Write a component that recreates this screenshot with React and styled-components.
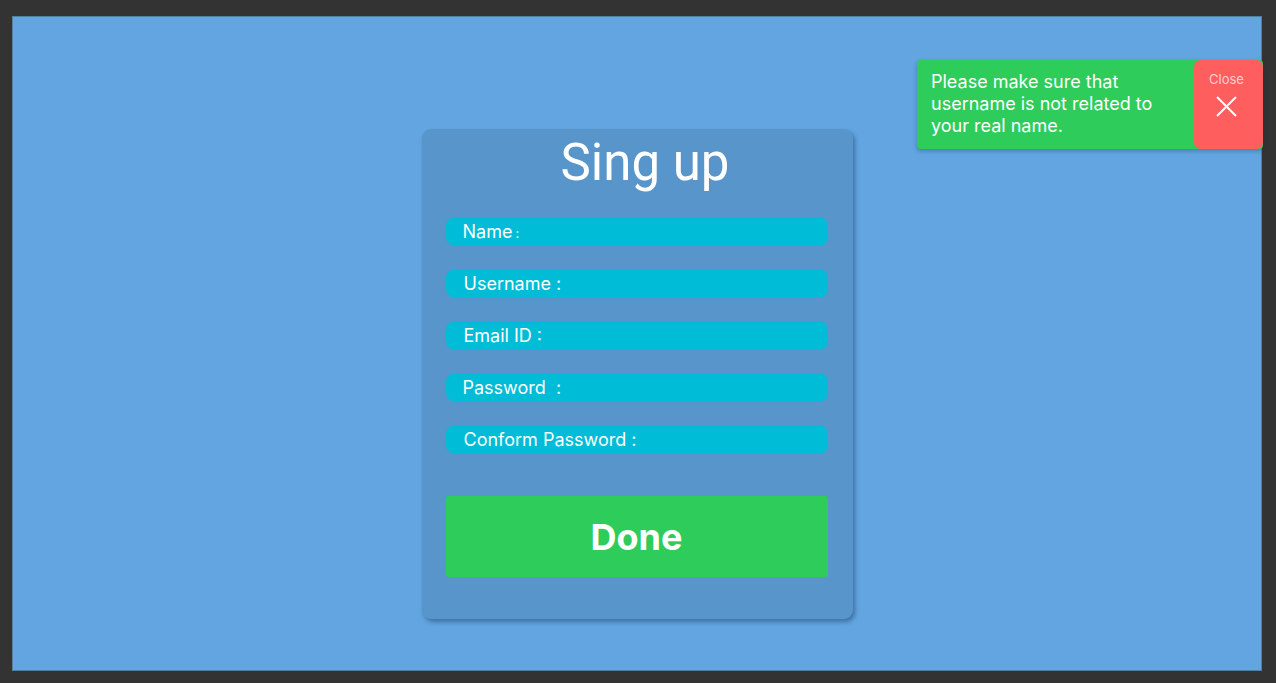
import React from "react";
import styled, { createGlobalStyle } from "styled-components";

const Global = createGlobalStyle`
  html, body { margin: 0; padding: 0; background: #333333; }
  body { font-family: Inter, "Noto Sans", sans-serif; }
  * { box-sizing: border-box; }
`;

const Stage = styled.div`
  width: 1276px;
  height: 683px;
  padding: 16px 14px 12px 12px;
  background: #333333;
`;

const Frame = styled.div`
  position: relative;
  width: 1250px;
  height: 655px;
  background: #62a5e0;
  border: 1px solid #51809f;
  display: flex;
  justify-content: center;
  align-items: flex-start;
  padding-top: 112px;
`;

const Card = styled.div`
  width: 431px;
  height: 490px;
  background: #5795cb;
  border-radius: 9px;
  box-shadow: 2px 3px 4px rgba(20, 50, 90, 0.45);
  padding: 4px 24px 0 24px;
  display: flex;
  flex-direction: column;
`;

const Title = styled.h1`
  margin: 0 0 25px 0;
  font-family: Roboto, "Noto Sans", sans-serif;
  font-weight: 400;
  font-size: 51px;
  line-height: 59px;
  color: #ffffff;
  text-align: center;
  padding-left: 16px;
`;

const Fields = styled.div`
  display: flex;
  flex-direction: column;
  gap: 23px;
`;

const Field = styled.div`
  height: 29px;
  width: 382px;
  background: #00bcd6;
  border-radius: 9px;
  display: flex;
  align-items: center;
  padding-left: ${(p) => p.$indent || 17}px;
  color: #ffffff;
  font-size: 18px;
  white-space: pre;
`;

const SmallColon = styled.span`
  font-size: 13px;
  margin-left: 3px;
  padding-top: 3px;
`;

const DoneButton = styled.button`
  margin-top: 42px;
  width: 382px;
  height: 81px;
  border: none;
  border-radius: 3px;
  background: #2ecc5a;
  color: #ffffff;
  font-family: Inter, "Noto Sans", sans-serif;
  font-weight: 700;
  font-size: 36px;
  padding: 0;
  cursor: pointer;
`;

const Toast = styled.div`
  position: absolute;
  top: 43px;
  right: -2px;
  width: 346px;
  height: 89px;
  background: #2ecc5a;
  border-radius: 4px;
  box-shadow: 0 2px 4px rgba(20, 50, 90, 0.35);
  display: flex;
`;

const ToastText = styled.p`
  margin: 0;
  flex: 1;
  padding: 11px 16px 0 14px;
  color: #ffffff;
  font-size: 18px;
  line-height: 22px;
`;

const CloseBox = styled.button`
  width: 69px;
  height: 89px;
  border: none;
  border-radius: 7px;
  background: #ff5e5e;
  display: flex;
  flex-direction: column;
  align-items: center;
  padding: 12px 4px 0 0;
  gap: 9px;
  cursor: pointer;
`;

const CloseLabel = styled.span`
  font-family: Inter, "Noto Sans", sans-serif;
  font-size: 13px;
  line-height: 15px;
  color: rgba(255, 255, 255, 0.7);
`;

export default function App() {
  return (
    <>
      <Global />
      <Stage>
        <Frame>
          <Card>
            <Title>Sing up</Title>
            <Fields>
              <Field $indent={17}>
                Name<SmallColon>:</SmallColon>
              </Field>
              <Field $indent={18}>Username :</Field>
              <Field $indent={18}>Email ID :</Field>
              <Field $indent={17}>{"Password  :"}</Field>
              <Field $indent={18}>Conform Password :</Field>
            </Fields>
            <DoneButton>Done</DoneButton>
          </Card>
          <Toast>
            <ToastText>
              Please make sure that username is not related to your real name.
            </ToastText>
            <CloseBox>
              <CloseLabel>Close</CloseLabel>
              <svg width="21" height="21" viewBox="0 0 21 21" fill="none">
                <path d="M1 1 L20 20 M20 1 L1 20" stroke="#ffffff" strokeWidth="2" />
              </svg>
            </CloseBox>
          </Toast>
        </Frame>
      </Stage>
    </>
  );
}
